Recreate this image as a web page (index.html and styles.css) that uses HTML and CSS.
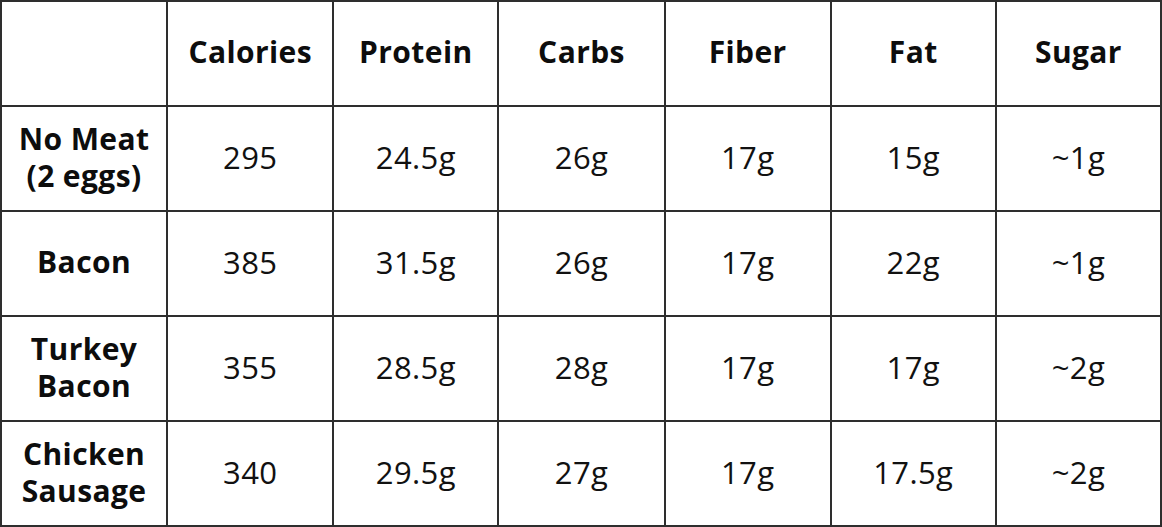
FILE: index.html
```html
<!DOCTYPE html>
<html lang="en">
<head>
    <meta charset="UTF-8">
    <meta name="viewport" content="width=device-width, initial-scale=1.0">
    <title>Breakfast Nutrition</title>
    <link rel="stylesheet" href="styles.css">
</head>
<body>

    <table class="nutrition">
        <colgroup>
            <col class="col-label">
            <col class="col-a">
            <col class="col-b">
            <col class="col-a">
            <col class="col-c">
            <col class="col-d">
            <col class="col-d">
        </colgroup>
        <thead>
            <tr class="head-row">
                <th></th>
                <th>Calories</th>
                <th>Protein</th>
                <th>Carbs</th>
                <th>Fiber</th>
                <th>Fat</th>
                <th>Sugar</th>
            </tr>
        </thead>
        <tbody>
            <tr class="tall">
                <th>No Meat<br>(2 eggs)</th>
                <td>295</td>
                <td>24.5g</td>
                <td>26g</td>
                <td>17g</td>
                <td>15g</td>
                <td>~1g</td>
            </tr>
            <tr>
                <th>Bacon</th>
                <td>385</td>
                <td>31.5g</td>
                <td>26g</td>
                <td>17g</td>
                <td>22g</td>
                <td>~1g</td>
            </tr>
            <tr>
                <th>Turkey<br>Bacon</th>
                <td>355</td>
                <td>28.5g</td>
                <td>28g</td>
                <td>17g</td>
                <td>17g</td>
                <td>~2g</td>
            </tr>
            <tr>
                <th>Chicken<br>Sausage</th>
                <td>340</td>
                <td>29.5g</td>
                <td>27g</td>
                <td>17g</td>
                <td>17.5g</td>
                <td>~2g</td>
            </tr>
        </tbody>
    </table>

</body>
</html>
```

FILE: styles.css
```css
body {
    margin: 0;
    padding: 0;
    background-color: #ffffff;
    font-family: "Open Sans", Arial, sans-serif;
    color: #111111;
}
.nutrition {
    width: 1162px;
    border-collapse: collapse;
    table-layout: fixed;
}
.col-label { width: 166px; }
.col-a { width: 166px; }
.col-b { width: 165px; }
.col-c { width: 166px; }
.col-d { width: 165px; }
.nutrition th,
.nutrition td {
    border: 2px solid #2e2e2e;
    text-align: center;
    vertical-align: middle;
    padding: 0 0 4px;
    height: 99px;
}
.nutrition th {
    font-family: "Open Sans", Arial, sans-serif;
    font-weight: 700;
    font-size: 30px;
    letter-spacing: 0.4px;
    line-height: 37px;
    color: #0d0d0d;
}
.nutrition td {
    font-size: 31px;
    letter-spacing: 0.4px;
    font-weight: 400;
}
.head-row th {
    height: 99px;
}
.tall th,
.tall td {
    height: 99px;
}
```
